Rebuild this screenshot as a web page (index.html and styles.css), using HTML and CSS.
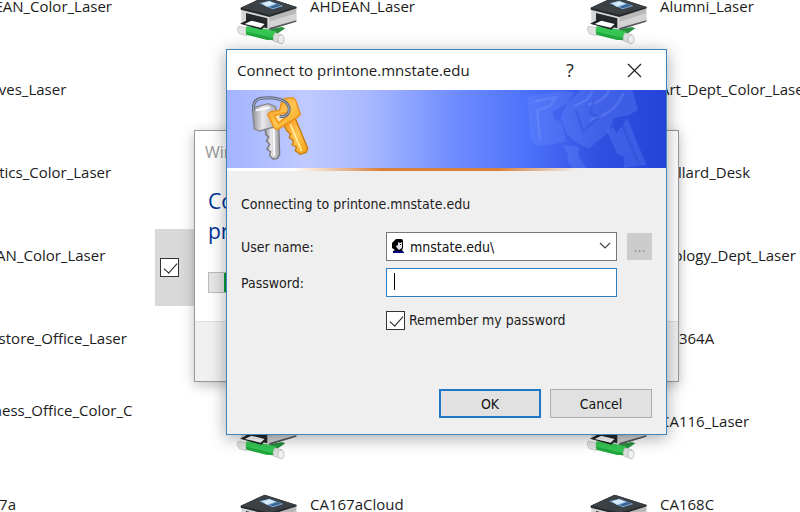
FILE: index.html
```html
<!DOCTYPE html>
<html lang="en">
<head>
    <meta charset="UTF-8">
    <meta name="viewport" content="width=device-width, initial-scale=1.0">
    <title>Connect to printone.mnstate.edu</title>
    <link rel="stylesheet" href="styles.css">
</head>
<body>
    <!-- Shared printer icon -->
    <svg class="symbols" aria-hidden="true">
        <symbol id="printer" viewBox="12 -9 186 147">
            <path d="M18 82 L46 86 L44 110 L22 104 Q12 94 18 82 Z" fill="#e0e3e0" stroke="#b9bcb9" stroke-width="2"/>
            <path d="M100 92 L150 84 L160 88 L136 104 Z" fill="#27903d"/>
            <path d="M44 82 L78 84 L134 98 Q124 108 126 124 L104 122 L44 107 Q38 94 44 82 Z" fill="#35c653"/>
            <path d="M42 98 L124 117 L126 124 L104 122 L44 107 Z" fill="#22a83f"/>
            <path d="M128 102 L150 107 L150 134 L124 126 Q122 112 128 102 Z" fill="#dcdfdc" stroke="#b9bcb9" stroke-width="2"/>
            <ellipse cx="147" cy="121" rx="9" ry="13" fill="#f2f2f2" stroke="#adadad" stroke-width="2"/>
            <path d="M28 28 L112 50 L112 92 L28 72 Z" fill="#d6d6d6"/>
            <path d="M112 50 L193 26 L193 66 L112 92 Z" fill="#b9b9b9"/>
            <path d="M112 68 L193 42 L193 66 L112 88 Z" fill="#d3d3d3"/>
            <path d="M112 87 L193 64 L193 68 L112 93 Z" fill="#55585a"/>
            <path d="M42 42 L106 58 L106 88 L42 72 Z" fill="#26292b"/>
            <path d="M24 74 L52 60 L106 74 L88 92 Z" fill="#1e2123"/>
            <path d="M38 75 L58 65 L98 75 L86 86 Z" fill="#fff"/>
            <path d="M26 26 L98 -7 L194 24 L194 28 L112 54 L26 32 Z" fill="#26292c"/>
            <path d="M26 26 L98 -7 L194 24 L112 47 Z" fill="#3c4145"/>
            <path d="M82 13 L112 5 L154 21 L122 31 Z" fill="#7fb0e0"/>
            <path d="M90 13 L112 7 L130 14 L104 23 Z" fill="#d8ebfa"/>
            <path d="M112 24 L136 15 L148 20 L122 28 Z" fill="#39648e"/>
        </symbol>
    </svg>

    <main class="desktop">
        <ul class="printers">
            <li class="printer"><span class="name">AHDEAN_Color_Laser</span></li>
            <li class="printer"><svg class="icon"><use href="#printer"/></svg><span class="name">AHDEAN_Laser</span></li>
            <li class="printer"><svg class="icon"><use href="#printer"/></svg><span class="name">Alumni_Laser</span></li>

            <li class="printer"><span class="name">Archives_Laser</span></li>
            <li class="printer"><svg class="icon"><use href="#printer"/></svg></li>
            <li class="printer"><svg class="icon"><use href="#printer"/></svg><span class="name">Art_Dept_Color_Laser</span></li>

            <li class="printer"><span class="name">Athletics_Color_Laser</span></li>
            <li class="printer"><svg class="icon"><use href="#printer"/></svg></li>
            <li class="printer"><svg class="icon"><use href="#printer"/></svg><span class="name">Ballard_Desk</span></li>

            <li class="printer"><span class="name">BIDEAN_Color_Laser</span></li>
            <li class="printer selected"><input type="checkbox" class="check" aria-label="Select printer" checked><svg class="icon"><use href="#printer"/></svg></li>
            <li class="printer"><svg class="icon"><use href="#printer"/></svg><span class="name">Biology_Dept_Laser</span></li>

            <li class="printer"><span class="name">Bookstore_Office_Laser</span></li>
            <li class="printer"><svg class="icon"><use href="#printer"/></svg></li>
            <li class="printer"><svg class="icon"><use href="#printer"/></svg><span class="name">BR364A</span></li>

            <li class="printer two-line"><span class="name">Business_Office_Color_C</span></li>
            <li class="printer"><svg class="icon"><use href="#printer"/></svg></li>
            <li class="printer"><svg class="icon"><use href="#printer"/></svg><span class="name">CA116_Laser</span></li>

            <li class="printer"><span class="name">CA167a</span></li>
            <li class="printer"><svg class="icon"><use href="#printer"/></svg><span class="name">CA167aCloud</span></li>
            <li class="printer"><svg class="icon"><use href="#printer"/></svg><span class="name">CA168C</span></li>
        </ul>

        <!-- Progress window behind the login dialog -->
        <section class="progress-window">
            <div class="progress-title">Win</div>
            <div class="progress-content">
                <p class="progress-text">Co<br>pr</p>
                <div class="progress-bar"><div class="progress-fill"></div></div>
            </div>
            <div class="progress-footer"></div>
        </section>

        <!-- Login dialog -->
        <section class="dialog" role="dialog" aria-labelledby="dialog-title">
            <header class="title-bar">
                <h1 id="dialog-title">Connect to printone.mnstate.edu</h1>
                <button type="button" class="title-button" aria-label="Help">?</button>
                <button type="button" class="title-button" aria-label="Close">
                    <svg width="15" height="15" viewBox="0 0 15 15"><path d="M1 1 L14 14 M14 1 L1 14" stroke="#222" stroke-width="1.2" fill="none"/></svg>
                </button>
            </header>

            <div class="banner">
                <svg class="keys" viewBox="0 15 225 234" aria-hidden="true">
                    <defs>
                        <linearGradient id="silver" x1="0" y1="0" x2="1" y2="0">
                            <stop offset="0" stop-color="#8e8e96"/>
                            <stop offset="0.4" stop-color="#e9e9ec"/>
                            <stop offset="1" stop-color="#a0a0a6"/>
                        </linearGradient>
                        <linearGradient id="gold" x1="0" y1="0" x2="1" y2="1">
                            <stop offset="0" stop-color="#f58a12"/>
                            <stop offset="0.5" stop-color="#ffc552"/>
                            <stop offset="1" stop-color="#f0a010"/>
                        </linearGradient>
                    </defs>
                    <path d="M60 126 L62 148 L71 156 L64 168 L74 178 L66 192 L77 200 L74 212 L84 222 L98 220 L104 208 L101 122 Z" fill="url(#silver)" stroke="#77777c" stroke-width="4"/>
                    <path d="M86 130 L88 212" stroke="#fff" stroke-width="5" fill="none"/>
                    <path d="M22 76 L32 66 L70 56 L92 66 L100 112 L88 126 L44 138 L28 132 Z" fill="url(#silver)" stroke="#85858c" stroke-width="4"/>
                    <path d="M32 76 L74 68" stroke="#fff" stroke-width="5" fill="none"/>
                    <path d="M116 120 L126 138 L136 146 L133 158 L145 166 L142 180 L154 186 L151 197 L166 208 L184 202 L188 190 L150 98 Z" fill="url(#gold)" stroke="#c9790a" stroke-width="4"/>
                    <path d="M136 118 L170 198" stroke="#fff0a0" stroke-width="5" fill="none"/>
                    <path d="M68 88 L78 80 L104 76 L110 48 L120 40 L144 38 L152 46 L166 88 L156 98 L140 106 L98 134 L88 130 Z" fill="url(#gold)" stroke="#e8901c" stroke-width="4"/>
                    <path d="M88 92 L124 82 L124 96 L100 114 Z" fill="#ffe9b8" stroke="#f59a20" stroke-width="5"/>
                    <path d="M26 76 Q22 44 48 40 Q92 34 120 50 Q138 64 130 84 Q122 98 104 94" fill="none" stroke="#626a7c" stroke-width="9"/>
                    <path d="M26 76 Q22 44 48 40 Q92 34 120 50 Q138 64 130 84 Q122 98 104 94" fill="none" stroke="#a9b2c8" stroke-width="3"/>
                </svg>
                <svg class="watermark" viewBox="0 270 500 234" aria-hidden="true">
                    <g fill="#6f93ff" fill-opacity="0.26">
                        <path d="M85 290 L180 272 L225 276 L205 310 L160 335 L166 360 L186 364 L202 425 L118 440 L94 420 Z"/>
                        <path d="M190 435 L240 440 L238 470 L262 504 L218 504 L204 480 L206 462 Z"/>
                        <path d="M205 310 L245 270 L400 270 L416 330 L390 345 L345 355 L325 400 L270 445 L235 430 L200 400 L185 350 Z"/>
                        <path d="M322 392 L342 380 L352 400 L384 355 L442 495 L400 500 L374 504 L376 470 L354 462 Z"/>
                    </g>
                    <path d="M106 304 L170 292 L150 320 L114 330 L122 420 M268 315 Q320 300 330 270 M272 360 Q350 340 372 280 M224 320 L262 300 L280 275" stroke="#86a4ff" stroke-opacity="0.25" stroke-width="8" fill="none"/>
                    <path d="M230 330 L252 395 L300 350 L272 340 L286 300 M370 375 L420 495" stroke="#1b3fc4" stroke-opacity="0.25" stroke-width="7" fill="none"/>
                </svg>
            </div>
            <div class="banner-line"></div>

            <form class="login">
                <p class="message">Connecting to printone.mnstate.edu</p>
                <div class="fields">
                    <label for="user">User name:</label>
                    <div class="control">
                        <select id="user" class="user">
                            <option>mnstate.edu\</option>
                        </select>
                        <svg class="user-icon" viewBox="0 0 12 14" aria-hidden="true">
                            <path d="M2 2 L4 0 L10 0 L11 2 L11 9 L10 11 L12 14 L1 14 L1 12 L3 11 L0 9 L0 4 Z" fill="#000"/>
                            <path d="M6 3 L8 4 L10 3 L10 9 L7 11 L5 9 L4 7 L6 6 Z" fill="#dfe3ea"/>
                            <path d="M8 5 L9 5 L9 6 L8 6 Z" fill="#000"/>
                            <path d="M1 12 L11 12 L12 14 L1 14 Z" fill="#000080"/>
                        </svg>
                        <svg class="chevron" viewBox="0 0 12 8" aria-hidden="true"><path d="M1 1 L6 6 L11 1" stroke="#444" stroke-width="1.2" fill="none"/></svg>
                    </div>
                    <button type="button" class="browse" aria-label="Browse" disabled>...</button>

                    <label for="password">Password:</label>
                    <div class="control">
                        <input type="password" id="password" class="password">
                        <span class="caret"></span>
                    </div>
                </div>
                <div class="remember">
                    <input type="checkbox" id="remember" class="check" checked>
                    <label for="remember">Remember my password</label>
                </div>
                <div class="buttons">
                    <button type="button" class="button default">OK</button>
                    <button type="button" class="button">Cancel</button>
                </div>
            </form>
        </section>
    </main>
</body>
</html>
```

FILE: styles.css
```css
* {
    box-sizing: border-box;
}
body {
    margin: 0;
    font-family: "Open Sans", "Noto Sans", sans-serif;
    font-size: 15px;
    color: #1c1c1c;
    background-color: #fff;
    overflow: hidden;
}
.symbols {
    position: absolute;
    width: 0;
    height: 0;
}
.desktop {
    position: relative;
    height: 100vh;
    overflow: hidden;
}

/* Printer tiles */
.printers {
    display: grid;
    grid-template-columns: repeat(3, 344px);
    grid-auto-rows: 77px;
    gap: 6px;
    margin: -20px 0 0 -195px;
    padding: 0;
    list-style: none;
}
.printer {
    display: grid;
    grid-template-columns: 81px 74px 1fr;
    align-items: start;
    padding-top: 16px;
}
.printer .icon {
    grid-column: 2;
    width: 62px;
    height: 49px;
}
.printer .name {
    grid-column: 3;
    grid-row: 1;
    line-height: 20px;
    white-space: nowrap;
}
.printer:nth-child(3n+1) .name {
    padding-left: 3px;
}
.printer.two-line {
    padding-top: 5px;
}
.printer.selected {
    background-color: #d9d9d9;
}
.printer .check {
    grid-column: 1;
    grid-row: 1;
    margin: 13px 0 0 5px;
}
.check {
    appearance: none;
    width: 19px;
    height: 19px;
    margin: 0;
    border: 1px solid #333;
    background-color: #fff;
}
.check:checked::before {
    content: "";
    display: block;
    width: 6px;
    height: 12px;
    margin: 1px 0 0 6px;
    border: solid #222;
    border-width: 0 1px 1px 0;
    transform: rotate(42deg);
}

/* Progress window */
.progress-window {
    position: absolute;
    left: 194px;
    top: 130px;
    width: 485px;
    border: 1px solid #999;
    background-color: #fff;
    box-shadow: 0 3px 12px rgba(0, 0, 0, 0.25);
}
.progress-title {
    padding: 10px;
    line-height: 22px;
    font-size: 16px;
    color: #999;
}
.progress-content {
    height: 148px;
    padding: 13px;
}
.progress-text {
    margin: 0 0 26px;
    font-size: 21px;
    line-height: 30px;
    color: #003399;
}
.progress-bar {
    height: 21px;
    padding-left: 15px;
    border: 1px solid #bcbcbc;
    background-color: #e6e6e6;
}
.progress-fill {
    width: 40%;
    height: 100%;
    background-color: #06a03c;
}
.progress-footer {
    height: 60px;
    border-top: 1px solid #dfdfdf;
    background-color: #f0f0f0;
}

/* Login dialog */
.dialog {
    position: absolute;
    left: 226px;
    top: 49px;
    width: 441px;
    border: 1px solid #3f86c0;
    background-color: #efefef;
    box-shadow: 0 3px 16px rgba(0, 0, 0, 0.35);
}
.title-bar {
    display: flex;
    align-items: center;
    height: 40px;
    padding-left: 10px;
    background-color: #fff;
}
.title-bar h1 {
    flex: 1;
    margin: 0;
    font-size: 15px;
    font-weight: normal;
}
.title-button {
    display: flex;
    align-items: center;
    justify-content: center;
    width: 64px;
    height: 40px;
    padding: 0;
    border: none;
    background: none;
    font: inherit;
    font-size: 18px;
    color: #222;
}
.banner {
    display: flex;
    justify-content: space-between;
    height: 78px;
    padding-left: 18px;
    background: linear-gradient(90deg, #a3b4ff 0%, #bfcaff 18%, #a9b9ff 32%, #6f8cff 52%, #4d72fb 68%, #2f50e0 85%, #2444d8 100%);
}
.keys {
    width: 75px;
    height: 78px;
}
.watermark {
    width: 167px;
    height: 78px;
}
.banner-line {
    height: 3px;
    background: linear-gradient(90deg, #fff 0%, #fff 15%, #d9823c 35%, #d9823c 62%, #efefef 80%, #efefef 100%);
}
.login {
    padding: 22px 14px 16px;
    font-family: "DejaVu Sans Condensed", "Noto Sans", sans-serif;
    font-size: 14px;
}
.message {
    margin: 0 0 17px;
    line-height: 22px;
}
.fields {
    display: grid;
    grid-template-columns: 145px 1fr 25px;
    row-gap: 7px;
    align-items: center;
}
.fields label {
    line-height: 22px;
}
.control {
    position: relative;
    display: flex;
    margin-right: 10px;
}
.user,
.password {
    width: 100%;
    height: 29px;
    margin: 0;
    border: 1px solid #777;
    border-radius: 0;
    background-color: #fff;
    font: inherit;
    color: #111;
    outline: none;
}
.user {
    appearance: none;
    padding: 0 24px 0 23px;
}
.password {
    padding: 0 7px;
    border-color: #2e7fc4;
}
.user-icon {
    position: absolute;
    left: 6px;
    top: 7px;
    width: 12px;
    height: 14px;
}
.chevron {
    position: absolute;
    right: 6px;
    top: 10px;
    width: 12px;
    height: 8px;
}
.caret {
    position: absolute;
    left: 8px;
    top: 5px;
    width: 1px;
    height: 17px;
    background-color: #000;
}
.browse {
    width: 25px;
    height: 27px;
    padding: 0;
    border: none;
    background-color: #ccc;
    font: inherit;
    color: #8a8a8a;
}
.remember {
    display: flex;
    align-items: center;
    gap: 4px;
    margin: 12px 0 58px 145px;
    line-height: 22px;
}
.buttons {
    display: flex;
    justify-content: flex-end;
    gap: 9px;
}
.button {
    width: 102px;
    height: 29px;
    padding: 0;
    border: 1px solid #adadad;
    background-color: #e1e1e1;
    font: inherit;
    color: #111;
}
.button.default {
    border: 2px solid #1d77c5;
}
```
